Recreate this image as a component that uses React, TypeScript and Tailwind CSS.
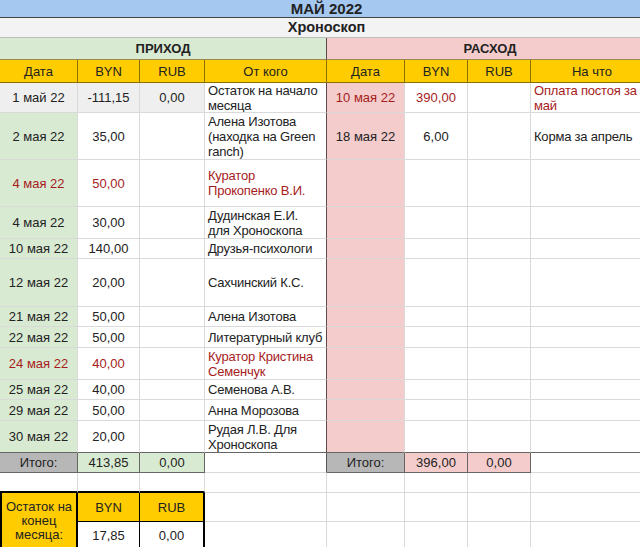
import { twMerge } from "tailwind-merge";

type Row = { d: string; byn: string; rub?: string; who: string; red?: boolean };

const income: Row[] = [
  { d: "1 май 22", byn: "-111,15", rub: "0,00", who: "Остаток на начало месяца" },
  { d: "2 мая 22", byn: "35,00", who: "Алена Изотова (находка на Green ranch)" },
  { d: "4 мая 22", byn: "50,00", who: "Куратор Прокопенко В.И.", red: true },
  { d: "4 мая 22", byn: "30,00", who: "Дудинская Е.И.\nдля Хроноскопа" },
  { d: "10 мая 22", byn: "140,00", who: "Друзья-психологи" },
  { d: "12 мая 22", byn: "20,00", who: "Сахчинский К.С." },
  { d: "21 мая 22", byn: "50,00", who: "Алена Изотова" },
  { d: "22 мая 22", byn: "50,00", who: "Литературный клуб" },
  { d: "24 мая 22", byn: "40,00", who: "Куратор Кристина Семенчук", red: true },
  { d: "25 мая 22", byn: "40,00", who: "Семенова А.В." },
  { d: "29 мая 22", byn: "50,00", who: "Анна Морозова" },
  { d: "30 мая 22", byn: "20,00", who: "Рудая Л.В. Для Хроноскопа" },
];

const spend: (Row | null)[] = [
  { d: "10 мая 22", byn: "390,00", who: "Оплата постоя за май", red: true },
  { d: "18 мая 22", byn: "6,00", who: "Корма за апрель" },
  null, null, null, null, null, null, null, null, null, null,
];

function C({ c = "", children }: { c?: string; children?: React.ReactNode }) {
  return (
    <div
      className={twMerge(
        "flex items-center justify-center text-center border-r border-b border-[#dadada] px-[3px] overflow-hidden text-[13px] leading-[15px] text-[#222]",
        c
      )}
    >
      {children}
    </div>
  );
}

export default function App() {
  const red = "text-[#a61c1c]";
  const yellow = "bg-[#ffcc00] border-[#8a7000]";
  const left = "justify-start text-left pl-[3px] pr-0 tracking-[-0.2px] whitespace-pre-line";
  return (
    <div className="w-[640px] h-[547px] overflow-hidden bg-white" style={{ fontFamily: '"Liberation Sans", Arial, sans-serif' }}>
      <div className="grid w-[654px] grid-cols-[78px_62px_65px_122px_78px_63px_63px_123px] grid-rows-[18px_20px_22px_23px_30px_47px_47px_32px_20px_48px_20px_21px_32px_20px_21px_32px_20px_20px_29px_27px]">
        <C c="col-span-8 bg-[#a4c8f0] border-b-[#444] font-bold text-[15px] leading-[17px]">МАЙ 2022</C>
        <C c="col-span-8 bg-[#f3f3f3] border-b-[#bdbdbd] font-bold text-[14.5px] leading-[17px]">Хроноскоп</C>
        <C c="col-span-4 bg-[#d9ead3] border-r-[#5a4a4a] border-b-[#9a8a50] font-bold">ПРИХОД</C>
        <C c="col-span-4 bg-[#f4cccc] border-b-[#9a8a50] font-bold">РАСХОД</C>

        <C c={yellow}>Дата</C>
        <C c={yellow}>BYN</C>
        <C c={yellow}>RUB</C>
        <C c={yellow}>От кого</C>
        <C c={yellow}>Дата</C>
        <C c={yellow}>BYN</C>
        <C c={yellow}>RUB</C>
        <C c={twMerge(yellow, "border-r-[#dadada]")}>На что</C>

        {income.map((r, i) => {
          const s = spend[i];
          const first = i === 0;
          const last = i === income.length - 1;
          const bl = last ? "border-b-[#666]" : "";
          const tone = r.red ? red : "";
          const sTone = s?.red ? red : "";
          return [
            <C key={`a${i}`} c={twMerge(first ? "bg-[#efefef]" : "bg-[#d9ead3]", tone, bl)}>{r.d}</C>,
            <C key={`b${i}`} c={twMerge(first ? "bg-[#efefef]" : "", tone, bl)}>{r.byn}</C>,
            <C key={`c${i}`} c={twMerge(first ? "bg-[#efefef]" : "", bl)}>{r.rub ?? ""}</C>,
            <C key={`d${i}`} c={twMerge(left, "border-r-[#5a4a4a]", tone, bl)}>{r.who}</C>,
            <C key={`e${i}`} c={twMerge("bg-[#f4cccc]", sTone, bl)}>{s?.d ?? ""}</C>,
            <C key={`f${i}`} c={twMerge(sTone, bl)}>{s?.byn ?? ""}</C>,
            <C key={`g${i}`} c={bl}></C>,
            <C key={`h${i}`} c={twMerge(left, sTone, bl)}>{s?.who ?? ""}</C>,
          ];
        })}

        <C c="bg-[#b7b7b7] border-r-[#666] border-b-[#666]">Итого:</C>
        <C c="bg-[#d9ead3] border-r-[#666] border-b-[#666]">413,85</C>
        <C c="bg-[#d9ead3] border-r-[#666] border-b-[#666]">0,00</C>
        <C c="border-r-[#555]"></C>
        <C c="bg-[#b7b7b7] border-r-[#666] border-b-[#666]">Итого:</C>
        <C c="bg-[#f4cccc] border-r-[#666] border-b-[#666]">396,00</C>
        <C c="bg-[#f4cccc] border-r-[#666] border-b-[#666]">0,00</C>
        <C></C>

        <C c="border-b-2 border-b-black"></C>
        <C c="border-b-2 border-b-black"></C>
        <C c="border-b-2 border-b-black"></C>
        <C></C>
        <C></C>
        <C></C>
        <C></C>
        <C></C>

        <C c="row-span-2 bg-[#ffcc00] border-l-2 border-l-black border-r-2 border-r-black border-b-black leading-[14px]">
          Остаток на конец месяца:
        </C>
        <C c="bg-[#ffcc00] border-r-black border-b-black">BYN</C>
        <C c="bg-[#ffcc00] border-r-2 border-r-black border-b-black">RUB</C>
        <C></C>
        <C></C>
        <C></C>
        <C></C>
        <C></C>

        <C c="border-r-black border-b-black">17,85</C>
        <C c="border-r-2 border-r-black border-b-black">0,00</C>
        <C></C>
        <C></C>
        <C></C>
        <C></C>
        <C></C>
      </div>
    </div>
  );
}
